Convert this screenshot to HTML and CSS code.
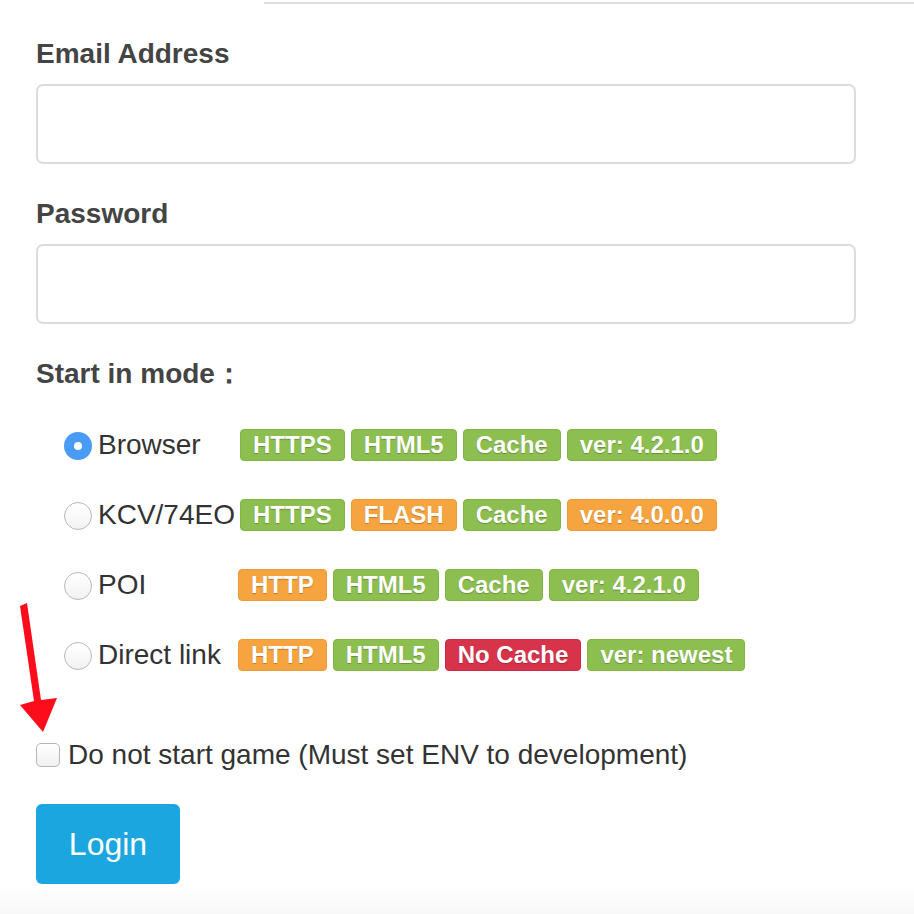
FILE: index.html
```html
<!DOCTYPE html>
<html>
<head>
<meta charset="utf-8">
<link rel="stylesheet" href="styles.css">
</head>
<body>
<div class="topline"></div>
<form class="form">
  <label class="field-label">Email Address</label>
  <div class="input"></div>
  <label class="field-label gap">Password</label>
  <div class="input"></div>
  <div class="field-label gap">Start in mode：</div>
  <div class="modes">
    <div class="mode">
      <div class="mode-name"><span class="radio on"></span>Browser</div>
      <div class="badges"><span class="badge g">HTTPS</span><span class="badge g">HTML5</span><span class="badge g">Cache</span><span class="badge g">ver: 4.2.1.0</span></div>
    </div>
    <div class="mode">
      <div class="mode-name"><span class="radio"></span>KCV/74EO</div>
      <div class="badges"><span class="badge g">HTTPS</span><span class="badge o">FLASH</span><span class="badge g">Cache</span><span class="badge o">ver: 4.0.0.0</span></div>
    </div>
    <div class="mode">
      <div class="mode-name narrow"><span class="radio"></span>POI</div>
      <div class="badges"><span class="badge o">HTTP</span><span class="badge g">HTML5</span><span class="badge g">Cache</span><span class="badge g">ver: 4.2.1.0</span></div>
    </div>
    <div class="mode">
      <div class="mode-name narrow"><span class="radio"></span>Direct link</div>
      <div class="badges"><span class="badge o">HTTP</span><span class="badge g">HTML5</span><span class="badge r">No Cache</span><span class="badge g">ver: newest</span></div>
    </div>
  </div>
  <div class="check-row"><span class="checkbox"></span>Do not start game (Must set ENV to development)</div>
  <div class="btn">Login</div>
</form>
<div class="footer"></div>
<svg class="arrow" width="70" height="140" viewBox="0 0 70 140">
  <polygon points="10,6 17,3 31,100 47,98 33,132 10,105 24,101" fill="#fc0d1b"/>
</svg>
</body>
</html>
```
FILE: styles.css
```css
html, body {
  margin: 0;
  padding: 0;
  background: #fff;
  font-family: "Liberation Sans", Arial, sans-serif;
  color: #333;
}
body {
  position: relative;
  height: 914px;
  overflow: hidden;
}
.topline {
  margin-left: 264px;
  margin-top: 2px;
  height: 2px;
  background: #dedede;
}
.form {
  display: flex;
  flex-direction: column;
  align-items: flex-start;
  padding: 34px 0 0 36px;
}
.field-label {
  font-size: 28px;
  line-height: 32px;
  font-weight: bold;
  color: #444;
  margin-bottom: 14px;
}
.field-label.gap {
  margin-top: 34px;
}
.input {
  box-sizing: border-box;
  width: 820px;
  height: 80px;
  border: 2px solid #dcdcdc;
  border-radius: 7px;
  background: #fff;
}
.modes {
  display: flex;
  flex-direction: column;
  margin-top: 6px;
  padding-left: 28px;
}
.mode {
  display: flex;
  align-items: center;
  height: 70px;
}
.mode-name {
  display: flex;
  align-items: center;
  width: 176px;
  font-size: 28px;
  color: #333;
  white-space: nowrap;
}
.mode-name.narrow {
  width: 174px;
}
.radio {
  box-sizing: border-box;
  width: 28px;
  height: 28px;
  border-radius: 50%;
  border: 1px solid #b8b8b8;
  background: linear-gradient(#fff, #f2f2f2);
  margin-right: 6px;
  flex: none;
  position: relative;
  top: 1px;
}
.radio.on {
  border: none;
  background: #4a9bf6;
}
.radio.on::after {
  content: "";
  position: absolute;
  left: 10px;
  top: 10px;
  width: 8px;
  height: 8px;
  border-radius: 50%;
  background: #fff;
}
.badges {
  display: flex;
  gap: 6px;
}
.badge {
  box-sizing: border-box;
  height: 32px;
  line-height: 30px;
  padding: 0 12px;
  border-radius: 4px;
  font-size: 24px;
  font-weight: bold;
  color: #fff;
  text-shadow: 0 1px 1px rgba(0,0,0,.25);
  border: 1px solid transparent;
  white-space: nowrap;
}
.badge.g {
  background: #8cbf4f;
  border-color: #82b446;
}
.badge.o {
  background: #f6a43f;
  border-color: #ec9a35;
}
.badge.r {
  background: #d7344c;
  border-color: #cb2c44;
}
.check-row {
  display: flex;
  align-items: center;
  height: 40px;
  margin-top: 45px;
  font-size: 28px;
  color: #333;
}
.checkbox {
  box-sizing: border-box;
  width: 24px;
  height: 24px;
  border: 1px solid #b5b5b5;
  border-radius: 5px;
  background: linear-gradient(#fff, #f0f0f0);
  margin-right: 8px;
  flex: none;
}
.btn {
  margin-top: 29px;
  width: 144px;
  height: 80px;
  box-sizing: border-box;
  border-radius: 6px;
  background: #1ba6e0;
  color: #fff;
  font-size: 32px;
  line-height: 80px;
  text-align: center;
}
.footer {
  height: 40px;
  background: linear-gradient(#fff, #f6f6f6);
}
.arrow {
  position: absolute;
  left: 10px;
  top: 600px;
}
```
